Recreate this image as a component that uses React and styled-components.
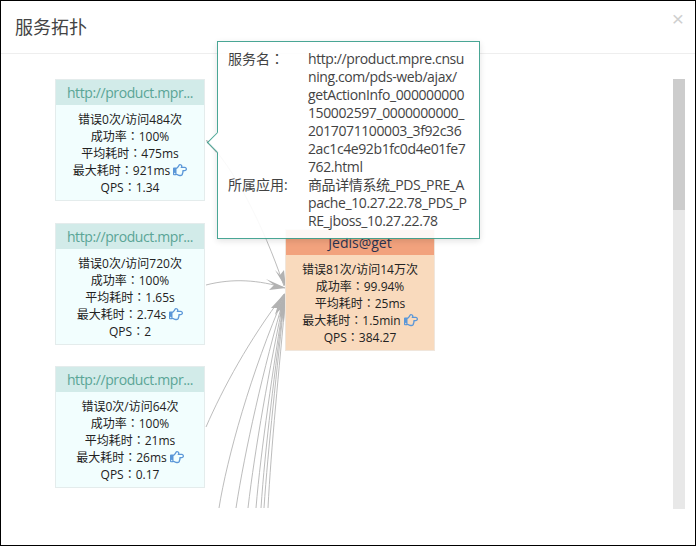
import React from "react";
import styled, { createGlobalStyle } from "styled-components";
import { FaRegHandPointRight } from "react-icons/fa";

const GlobalStyle = createGlobalStyle`
  html, body {
    margin: 0;
    padding: 0;
    background: #fff;
  }
  body {
    font-family: "Open Sans", "Noto Sans CJK SC", sans-serif;
  }
`;

const Modal = styled.div`
  box-sizing: border-box;
  width: 696px;
  height: 546px;
  border: 1px solid #000;
  background: #fff;
  display: flex;
  flex-direction: column;
  overflow: hidden;
`;

const Header = styled.div`
  box-sizing: border-box;
  height: 53px;
  flex: none;
  border-bottom: 1px solid #eeeeee;
  padding: 0 14px;
  display: flex;
  align-items: center;
  justify-content: space-between;
`;

const Title = styled.h4`
  margin: 0;
  font-size: 18px;
  font-weight: 400;
  line-height: 52px;
  color: #444;
`;

const Close = styled.span`
  font-size: 21px;
  line-height: 1;
  color: #cfcfcf;
  margin: -18px -3px 0 0;
  font-family: "Liberation Sans", sans-serif;
`;

const Body = styled.div`
  flex: 1;
  position: relative;
  display: flex;
  justify-content: flex-end;
  padding: 25px 10px 36px 0;
`;

const Track = styled.div`
  width: 12px;
  height: 430px;
  background: #e8e8e8;
`;

const Thumb = styled.div`
  height: 131px;
  background: #cccccc;
`;

const Canvas = styled.div`
  position: absolute;
  left: 0;
  top: 0;
  width: 672px;
  height: 454px;
  overflow: hidden;
`;

const Edges = styled.svg`
  position: absolute;
  left: 0;
  top: 0;
  width: 672px;
  height: 454px;
`;

const Node = styled.div`
  position: absolute;
  left: ${(p) => p.$x}px;
  top: ${(p) => p.$y}px;
  box-sizing: border-box;
  width: 150px;
  height: 122px;
  border: 1px solid ${(p) => (p.$hot ? "#f0e6dc" : "#e4ecec")};
  background: ${(p) => (p.$hot ? "#f9dabd" : "#f2fefe")};
  text-align: center;
`;

const NodeHead = styled.div`
  height: 25px;
  line-height: 25px;
  font-size: 14px;
  letter-spacing: ${(p) => (p.$hot ? "0" : "-0.4px")};
  background: ${(p) => (p.$hot ? "#f2a27d" : "#d2ebe9")};
  color: ${(p) => (p.$hot ? "#2b3350" : "#5aa596")};
  white-space: nowrap;
`;

const Stats = styled.div`
  padding-top: 6px;
  font-size: 12px;
  line-height: 17px;
  color: #222;
`;

const Colon = styled.span`
  font-family: "Noto Sans CJK TC", sans-serif;
  line-height: 0;
`;

const Thumbs = styled(FaRegHandPointRight)`
  width: 14px;
  height: 14px;
  color: #5b97d8;
  vertical-align: -2px;
  margin-left: 3px;
`;

const Popover = styled.div`
  position: absolute;
  left: 216px;
  top: -13px;
  box-sizing: border-box;
  width: 263px;
  height: 198px;
  padding: 8px 10px;
  background: #fff;
  border: 1px solid #3a9f8d;
  opacity: 0.92;
  display: grid;
  grid-template-columns: 80px 1fr;
  align-content: start;
  font-size: 14px;
  line-height: 18px;
  color: #333;
  box-shadow: 0 2px 6px rgba(0, 0, 0, 0.12);
`;

const PopoverArrow = styled.div`
  position: absolute;
  left: -8px;
  top: 93px;
  width: 14px;
  height: 14px;
  background: #fff;
  border-left: 1px solid #3a9f8d;
  border-bottom: 1px solid #3a9f8d;
  transform: rotate(45deg);
`;

const Label = styled.div``;

const Value = styled.div`
  white-space: nowrap;
  letter-spacing: -0.4px;
`;

const ValueLine = styled.div``;

const nodes = [
  { y: 25, err: "错误0次/访问484次", rate: "100%", avg: "475ms", max: "921ms", qps: "1.34" },
  { y: 169, err: "错误0次/访问720次", rate: "100%", avg: "1.65s", max: "2.74s", qps: "2" },
  { y: 312, err: "错误0次/访问64次", rate: "100%", avg: "21ms", max: "26ms", qps: "0.17" },
];

const serviceLines = [
  "http://product.mpre.cnsu",
  "ning.com/pds-web/ajax/",
  "getActionInfo_000000000",
  "150002597_0000000000_",
  "2017071100003_3f92c36",
  "2ac1c4e92b1fc0d4e01fe7",
  "762.html",
];

const appLines = ["商品详情系统_PDS_PRE_A", "pache_10.27.22.78_PDS_P", "RE_jboss_10.27.22.78"];

const curves = [
  "M205 86 C232 112 262 170 283 232",
  "M205 231 C232 224 258 226 284 234",
  "M205 373 C222 334 248 286 283 240",
  "M218 454 C226 404 250 318 284 240",
  "M235 454 C244 396 262 316 284 240",
  "M247 454 C254 394 268 316 284 240",
  "M255 454 C260 394 272 316 284 240",
  "M260 454 C264 394 274 316 284 240",
  "M263 454 C267 394 276 316 284 240",
  "M267 454 C270 394 278 316 285 240",
];

const heads = [
  "M285 234 L274 216 L279 221 L283 216 Z",
  "M285 234 L265 225 L273 231 L268 236 Z",
  "M285 238 L270 254 L276 254 L274 262 Z",
  "M285 238 L274 260 L279 256 L280 266 Z",
  "M285 239 L278 264 L281 260 L283 268 Z",
];

const Stat = ({ node }) => (
  <Stats>
    <div>{node.err}</div>
    <div>
      成功率<Colon>：</Colon>
      {node.rate}
    </div>
    <div>
      平均耗时<Colon>：</Colon>
      {node.avg}
    </div>
    <div>
      最大耗时<Colon>：</Colon>
      {node.max}
      <Thumbs />
    </div>
    <div>
      QPS<Colon>：</Colon>
      {node.qps}
    </div>
  </Stats>
);

export default function App() {
  return (
    <Modal>
      <GlobalStyle />
      <Header>
        <Title>服务拓扑</Title>
        <Close>×</Close>
      </Header>
      <Body>
        <Canvas>
          <Edges viewBox="0 0 672 454">
            {curves.map((d) => (
              <path key={d} d={d} fill="none" stroke="#b0b0b0" strokeWidth="0.85" />
            ))}
            <path d="M206 87 L216 98" fill="none" stroke="#b0b0b0" strokeWidth="2" />
            {heads.map((d) => (
              <path key={d} d={d} fill="#b2b2b2" />
            ))}
          </Edges>
          {nodes.map((node) => (
            <Node key={node.y} $x={54} $y={node.y}>
              <NodeHead>http://product.mpr...</NodeHead>
              <Stat node={node} />
            </Node>
          ))}
          <Node $hot $x={284} $y={175}>
            <NodeHead $hot>Jedis@get</NodeHead>
            <Stat
              node={{
                err: "错误81次/访问14万次",
                rate: "99.94%",
                avg: "25ms",
                max: "1.5min",
                qps: "384.27",
              }}
            />
          </Node>
        </Canvas>
        <Track>
          <Thumb />
        </Track>
        <Popover>
          <PopoverArrow />
          <Label>
            服务名<Colon>：</Colon>
          </Label>
          <Value>
            {serviceLines.map((line) => (
              <ValueLine key={line}>{line}</ValueLine>
            ))}
          </Value>
          <Label>所属应用:</Label>
          <Value>
            {appLines.map((line) => (
              <ValueLine key={line}>{line}</ValueLine>
            ))}
          </Value>
        </Popover>
      </Body>
    </Modal>
  );
}
